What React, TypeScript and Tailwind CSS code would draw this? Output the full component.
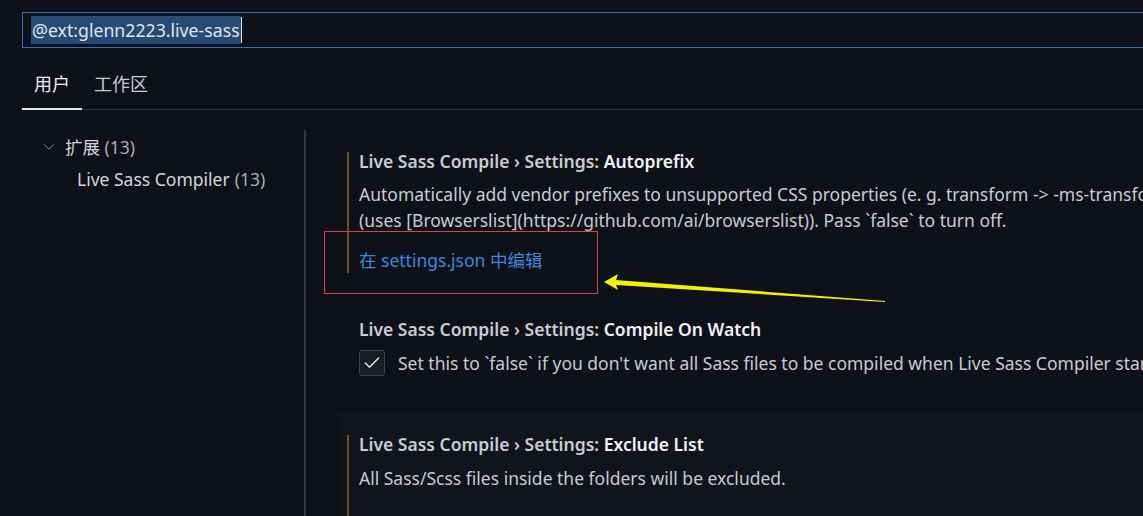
import React from 'react';
import { ChevronDown, Check } from 'lucide-react';

const font = { fontFamily: '"Noto Sans", "Noto Sans CJK SC", sans-serif' };

const SettingTitle = ({ name }: { name: string }) => (
  <div className="h-[18px] leading-[18px] text-[17.5px] font-semibold text-[#c9ccd1] whitespace-nowrap">
    Live Sass Compile › Settings: <span className="text-[#f0f2f5]">{name}</span>
  </div>
);

export default function App() {
  return (
    <div
      className="relative w-[1143px] h-[516px] overflow-hidden bg-[#0e1118] text-[#c8cbd1]"
      style={font}
    >
      {/* Search */}
      <div className="pt-[12px] pl-[22px]">
        <div className="w-[1200px] h-[36px] border border-[#3a6dc4] flex items-center pl-[8px]">
          <span className="bg-[#264a73] text-[#dfe6ee] text-[17.7px] leading-[28px] px-[1px] whitespace-nowrap">
            @ext:glenn2223.live-sass
          </span>
          <span className="w-[1px] h-[26px] bg-[#e6e6e6]" />
        </div>
      </div>

      {/* Tabs */}
      <div className="ml-[22px] mt-[12px] flex border-b border-[#2f3238] h-[50px]">
        <div className="w-[60px] flex items-center justify-center border-b-2 border-[#e8e8e8] text-[#f0f0f0] text-[18px] -mb-[1px]">
          用户
        </div>
        <div className="ml-[12px] flex items-center text-[18px] text-[#c8cbd1]">工作区</div>
      </div>

      {/* Body */}
      <div className="flex">
        <div className="w-[304px] shrink-0 pt-[25px] text-[17.5px]">
          <div className="flex items-center h-[24px] pl-[40px]">
            <ChevronDown size={18} strokeWidth={1.2} className="text-[#9a9da3]" />
            <span className="ml-[7px] text-[#d3d6db]">扩展 <span className="text-[#a9adb3]">(13)</span></span>
          </div>
          <div className="h-[24px] mt-[8px] pl-[77px] flex items-center whitespace-nowrap text-[#d3d6db]">
            Live Sass Compiler <span className="ml-[5px] text-[#a9adb3]">(13)</span>
          </div>
        </div>

        <div className="flex-1 flex">
          <div className="mt-[20px] w-[2px] h-[420px] bg-[#353840]" />
          <div className="flex-1 pl-[32px] pt-[42px] text-[17.5px]">
            {/* Autoprefix */}
            <div className="ml-[9px] border-l-2 border-[#6a5424] pl-[10px]">
              <SettingTitle name="Autoprefix" />
              <div className="mt-[11px] leading-[26px] whitespace-nowrap">
                <div>Automatically add vendor prefixes to unsupported CSS properties (e. g. transform -&gt; -ms-transform)</div>
                <div>(uses [Browserslist](https://github.com/ai/browserslist)). Pass `false` to turn off.</div>
              </div>
              <div className="mt-[14px] leading-[26px] text-[#3e86de]">在 settings.json 中编辑</div>
            </div>

            {/* Compile On Watch */}
            <div className="ml-[21px] mt-[47px]">
              <SettingTitle name="Compile On Watch" />
              <div className="mt-[12px] flex items-center h-[26px]">
                <div className="w-[26px] h-[26px] shrink-0 rounded-[3px] border border-[#3b3f47] bg-[#1a1d24] flex items-center justify-center">
                  <Check size={20} strokeWidth={1.6} className="text-[#f2f2f2]" />
                </div>
                <div className="ml-[13px] whitespace-nowrap">
                  Set this to `false` if you don't want all Sass files to be compiled when Live Sass Compiler starts watching.
                </div>
              </div>
            </div>

            {/* Exclude List */}
            <div className="mt-[36px] h-[120px] bg-[#11141b] pt-[23px] pl-[9px]">
              <div className="border-l-2 border-[#6a5424] pl-[10px] h-[100px]">
                <SettingTitle name="Exclude List" />
                <div className="mt-[12px] leading-[26px] whitespace-nowrap">
                  All Sass/Scss files inside the folders will be excluded.
                </div>
              </div>
            </div>
          </div>
        </div>
      </div>

      {/* Annotation */}
      <div className="absolute left-[324px] top-[231px] w-[274px] h-[63px] border border-[#d8404a]" />
      <svg className="absolute left-[600px] top-[272px]" width="290" height="34" viewBox="0 0 290 34">
        <polygon points="4,10 18,2 16,8 285,29 285,30 16,13 18,18" fill="#f5f200" />
      </svg>
    </div>
  );
}
